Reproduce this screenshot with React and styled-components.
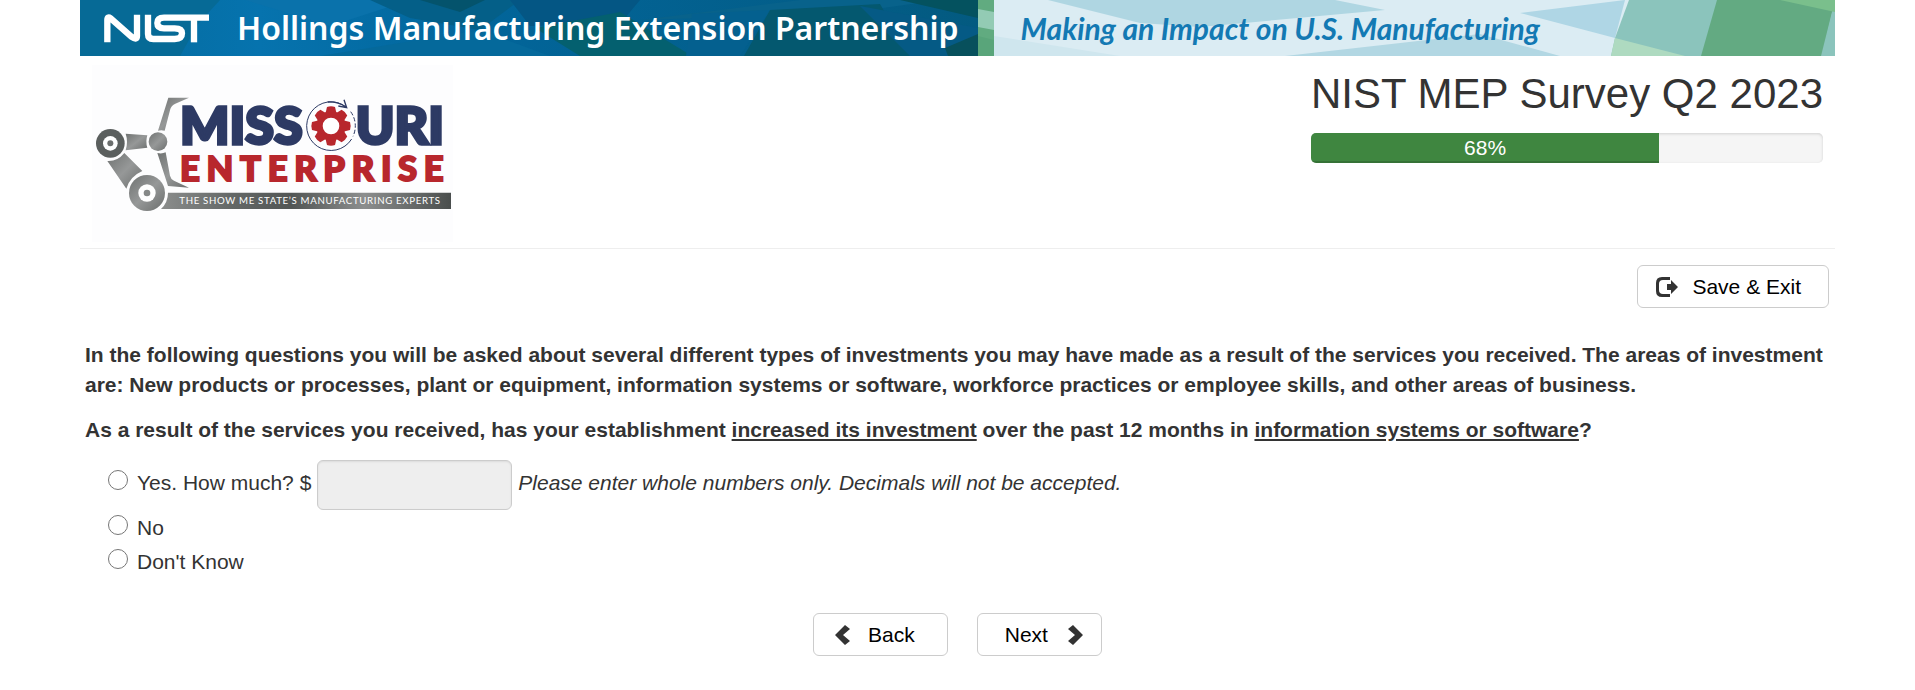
import React, { useState } from "react";
import styled, { createGlobalStyle } from "styled-components";

const GlobalStyle = createGlobalStyle`
  * {
    box-sizing: border-box;
  }
  body {
    margin: 0;
    background-color: #fff;
    color: #333;
    font-family: "Liberation Sans", Arial, sans-serif;
    font-size: 21px;
    line-height: 30px;
  }
`;

const Page = styled.div`
  padding: 0 80px 32px;
`;

const Banner = styled.div`
  position: relative;
  display: flex;
  align-items: center;
  height: 56px;
  overflow: hidden;
`;

const BannerArt = styled.svg`
  position: absolute;
  inset: 0;
  width: 100%;
  height: 100%;
`;

const BannerLeft = styled.div`
  position: relative;
  display: flex;
  align-items: center;
  gap: 28px;
  width: 52%;
  padding-left: 24px;
`;

const BannerTitle = styled.div`
  font-family: "Noto Sans", sans-serif;
  font-size: 32px;
  font-weight: 600;
  line-height: 56px;
  white-space: nowrap;
  color: #fff;
`;

const Tagline = styled.div`
  position: relative;
  padding-left: 28px;
  font-family: Lato, sans-serif;
  font-size: 30px;
  font-style: italic;
  font-weight: 700;
  line-height: 56px;
  white-space: nowrap;
  color: #1379b3;
`;

const Header = styled.header`
  display: flex;
  justify-content: space-between;
  align-items: flex-start;
  height: 193px;
  padding: 9px 12px 0;
  border-bottom: 1px solid #eee;
`;

const Status = styled.div`
  display: flex;
  flex-direction: column;
  gap: 15px;
`;

const Title = styled.h1`
  margin: 0;
  padding-top: 5px;
  font-size: 42px;
  font-weight: 400;
  line-height: 48px;
`;

const Progress = styled.div`
  height: 30px;
  overflow: hidden;
  border-radius: 5px;
  background-color: #f5f5f5;
  box-shadow: inset 0 1px 3px rgba(0, 0, 0, 0.15);
`;

const ProgressBar = styled.div`
  height: 100%;
  background-color: #3f8640;
  box-shadow: inset 0 -2px 0 rgba(0, 0, 0, 0.15);
  color: #fff;
  text-align: center;
`;

const Toolbar = styled.div`
  display: flex;
  justify-content: flex-end;
  padding: 16px 6px 0;
`;

const Button = styled.button`
  display: flex;
  align-items: center;
  gap: ${({ $gap }) => $gap || 18}px;
  height: 43px;
  padding: ${({ $pad }) => $pad || "0 27px 0 18px"};
  border: 1px solid #ccc;
  border-radius: 6px;
  background-color: #fff;
  color: #000;
  font: inherit;
  cursor: pointer;
  svg {
    fill: #333;
  }
`;

const Question = styled.fieldset`
  min-width: 0;
  margin: 32px 0 0;
  padding: 0 6px 0 5px;
  border: none;
`;

const Paragraph = styled.p`
  margin: 0 0 15px;
  font-weight: 700;
`;

const Options = styled.div`
  padding-left: 23px;
`;

const Option = styled.div`
  display: flex;
  align-items: center;
  gap: 6px;
  margin-bottom: ${({ $spaced }) => ($spaced ? 3 : 0)}px;
`;

const OptionLabel = styled.label`
  display: flex;
  align-items: center;
  gap: 9px;
  padding-bottom: 4px;
`;

const Hint = styled.em`
  padding-bottom: 4px;
`;

const Radio = styled.input`
  width: 20px;
  height: 20px;
  margin: 0 0 6px;
`;

const Amount = styled.input`
  width: 195px;
  height: 50px;
  padding: 8px 16px;
  border: 1px solid #ccc;
  border-radius: 6px;
  background-color: ${({ disabled }) => (disabled ? "#eee" : "#fff")};
  box-shadow: inset 0 1px 2px rgba(0, 0, 0, 0.08);
  color: #555;
  font: inherit;
`;

const Nav = styled.nav`
  display: flex;
  justify-content: center;
  gap: 29px;
  margin-top: 32px;
`;

const NistMark = () => (
  <svg width="105" height="29" viewBox="0 0 315 87" role="img" aria-label="NIST">
    <g fill="none" stroke="#fff" strokeWidth="19" strokeLinejoin="round">
      <path d="M10 85V18Q10 6 20 13L82 68Q99 80 99 66V2" />
      <path d="M132 2V60Q132 75 148 75H212Q234 75 234 58Q234 43 212 43H180Q160 43 160 27Q160 11 180 11H315" />
      <path d="M270 11V85" />
    </g>
  </svg>
);

const BannerBackground = () => (
  <BannerArt viewBox="0 0 1755 56" preserveAspectRatio="none" aria-hidden="true">
    <defs>
      <linearGradient id="deep">
        <stop offset="0" stopColor="#046a9c" />
        <stop offset="0.2" stopColor="#0673ae" />
        <stop offset="0.45" stopColor="#02659a" />
        <stop offset="1" stopColor="#035a80" />
      </linearGradient>
    </defs>
    <rect width="898" height="56" fill="url(#deep)" />
    <path d="M0 0H140L118 24L100 56H0Z" fill="#066a96" />
    <path d="M165 0H330L250 26Z" fill="#0a72ab" />
    <path d="M290 0H440L400 30L330 18Z" fill="#045f88" />
    <path d="M340 0H405L380 12Z" fill="#04536c" />
    <path d="M240 56L400 30L470 56Z" fill="#05699b" />
    <path d="M430 0H560L540 24L450 26Z" fill="#045684" />
    <path d="M455 28L540 12L612 56H500Z" fill="#04606f" />
    <path d="M560 20L720 0H860L760 14Z" fill="#08628b" />
    <path d="M612 14L690 10L660 56H606Z" fill="#04608f" />
    <path d="M690 10L800 4L830 56H664Z" fill="#04586f" />
    <path d="M780 6L898 28V56H830Z" fill="#055a85" />
    <path d="M865 48L898 34V56H868Z" fill="#07505c" />
    <path d="M820 0H898V18Z" fill="#04525f" />
    <rect x="898" width="16" height="56" fill="#61ab80" />
    <path d="M898 9L914 12V30L898 27Z" fill="#93cbb4" />
    <path d="M898 36L914 40V56H898Z" fill="#59a57a" />
    <rect x="914" width="841" height="56" fill="#dbecf3" />
    <path d="M968 0H1255L1305 10L1120 27L1060 23Z" fill="#afd6e2" />
    <path d="M914 36L1040 56H914Z" fill="#cfe6ee" />
    <path d="M1205 56L1400 34L1480 56Z" fill="#b2d7e3" />
    <path d="M1440 13L1545 0L1535 38Z" fill="#afd6e5" />
    <path d="M1549 0H1755V56H1531L1535 38Z" fill="#8bc4bc" />
    <path d="M1535 38L1605 56H1531Z" fill="#aedac0" />
    <path d="M1637 0H1755L1741 56H1621Z" fill="#63aa82" />
    <path d="M1700 0H1755V12Z" fill="#7abf8c" />
    <path d="M1752 13H1755V56H1742Z" fill="#8bc4bc" />
  </BannerArt>
);

// gear teeth, rotated around the centre
const toothAngles = [0, 45, 90, 135, 180, 225, 270, 315];

const CompanyLogo = () => (
  <svg
    width="361"
    height="177"
    viewBox="36 0 1083 531"
    role="img"
    aria-label="Missouri Enterprise"
  >
    <defs>
      <linearGradient id="steel" x1="0" y1="0" x2="1" y2="1">
        <stop offset="0" stopColor="#6f7271" />
        <stop offset="0.5" stopColor="#969898" />
        <stop offset="1" stopColor="#6b6e6d" />
      </linearGradient>
      <linearGradient id="bar">
        <stop offset="0" stopColor="#8b8d8c" />
        <stop offset="0.25" stopColor="#636766" />
        <stop offset="0.45" stopColor="#525655" />
        <stop offset="0.7" stopColor="#8c8e8e" />
        <stop offset="1" stopColor="#4a4e4d" />
      </linearGradient>
    </defs>
    <rect x="36" width="1083" height="531" fill="#fdfdfe" />
    <g fill="url(#steel)">
      <path d="M265 98H327L286 116Q274 121 271 132L254 197Q244 194 234 197Z" />
      <path d="M232 264Q246 267 257 262L270 332Q272 342 282 347L327 368L264 363Z" />
      <path d="M137 206L202 211Q196 230 202 248L137 256Q145 230 137 206Z" />
      <path d="M82 288Q112 290 133 264L187 318Q150 334 139 371Z" />
      <circle cx="234" cy="230" r="28" />
      <circle cx="201" cy="384" r="54" />
    </g>
    <circle cx="91" cy="235" r="43" fill="#5b5f5e" />
    <circle cx="91" cy="235" r="22" fill="#fff" />
    <circle cx="91" cy="235" r="9" fill="#6b6e6d" />
    <circle cx="201" cy="384" r="26" fill="#fff" />
    <circle cx="201" cy="384" r="10" fill="#868988" />
    <path d="M264 383H1113V432H243Q264 412 264 383Z" fill="url(#bar)" />

    <g
      fill="#2d3a64"
      stroke="#2d3a64"
      strokeWidth="10"
      fontFamily="Lato, sans-serif"
      fontWeight="900"
      fontSize="156"
    >
      <text x="300" y="238">MISS</text>
      <text x="827" y="238">URI</text>
    </g>
    <text
      x="300"
      y="347"
      fill="#b8272d"
      stroke="#b8272d"
      strokeWidth="6"
      fontFamily="Lato, sans-serif"
      fontWeight="900"
      fontSize="104"
      letterSpacing="20"
    >
      ENTERPRISE
    </text>
    <text
      x="298"
      y="417"
      fill="#fff"
      fontFamily="Lato, sans-serif"
      fontSize="29"
      letterSpacing="2"
    >
      THE SHOW ME STATE’S MANUFACTURING EXPERTS
    </text>

    <g transform="translate(753 183)">
      <g fill="#b8272d">
        <circle r="44" />
        {toothAngles.map((angle) => (
          <path
            key={angle}
            d="M-17 -36L-12 -57Q0 -61 12 -57L17 -36Z"
            transform={`rotate(${angle})`}
          />
        ))}
      </g>
      <circle r="25" fill="#fff" />
      <g fill="none" stroke="#2d3a64" strokeWidth="3">
        <path d="M45 -57A73 73 0 1 0 62 39" />
        <path d="M59 -43A73 73 0 0 1 66 31" strokeDasharray="13 6" />
        <path d="M-10 -72Q20 -74 45 -57M39 -79L47 -55L22 -60" strokeWidth="4" />
      </g>
    </g>
  </svg>
);

const ExitIcon = () => (
  <svg width="22" height="20" viewBox="0 0 22 20" aria-hidden="true">
    <path d="M14 0V3H7Q3 3 3 7V13Q3 17 7 17H14V20H6Q0 20 0 14V6Q0 0 6 0Z" />
    <path d="M11 7H15V3L22 10L15 17V13H11Z" />
  </svg>
);

const ChevronLeft = () => (
  <svg width="15" height="20" viewBox="0 0 15 20" aria-hidden="true">
    <path d="M10 0L15 4L8 10L15 16L10 20L0 10Z" />
  </svg>
);

const ChevronRight = () => (
  <svg width="15" height="20" viewBox="0 0 15 20" aria-hidden="true">
    <path d="M5 0L0 4L7 10L0 16L5 20L15 10Z" />
  </svg>
);

const App = () => {
  const [answer, setAnswer] = useState("");
  const [amount, setAmount] = useState("");
  const percent = 68;

  return (
    <>
      <GlobalStyle />
      <Page>
        <Banner>
          <BannerBackground />
          <BannerLeft>
            <NistMark />
            <BannerTitle>Hollings Manufacturing Extension Partnership</BannerTitle>
          </BannerLeft>
          <Tagline>Making an Impact on U.S. Manufacturing</Tagline>
        </Banner>

        <Header>
          <CompanyLogo />
          <Status>
            <Title>NIST MEP Survey Q2 2023</Title>
            <Progress
              role="progressbar"
              aria-label="Survey progress"
              aria-valuenow={percent}
              aria-valuemin={0}
              aria-valuemax={100}
            >
              <ProgressBar style={{ width: `${percent}%` }}>{percent}%</ProgressBar>
            </Progress>
          </Status>
        </Header>

        <Toolbar>
          <Button type="button" $gap={14}>
            <ExitIcon />
            Save &amp; Exit
          </Button>
        </Toolbar>

        <Question>
          <Paragraph>
            In the following questions you will be asked about several different types of
            investments you may have made as a result of the services you received. The
            areas of investment are: New products or processes, plant or equipment,
            information systems or software, workforce practices or employee skills, and
            other areas of business.
          </Paragraph>
          <Paragraph>
            As a result of the services you received, has your establishment{" "}
            <u>increased its investment</u> over the past 12 months in{" "}
            <u>information systems or software</u>?
          </Paragraph>
          <Options>
            <Option $spaced>
              <OptionLabel>
                <Radio
                  type="radio"
                  name="investment"
                  checked={answer === "yes"}
                  onChange={() => setAnswer("yes")}
                />
                <span>Yes. How much? $</span>
              </OptionLabel>
              <Amount
                type="text"
                aria-label="Amount in dollars"
                value={amount}
                disabled={answer !== "yes"}
                onChange={(e) => setAmount(e.target.value)}
              />
              <Hint>Please enter whole numbers only. Decimals will not be accepted.</Hint>
            </Option>
            <Option>
              <OptionLabel>
                <Radio
                  type="radio"
                  name="investment"
                  checked={answer === "no"}
                  onChange={() => setAnswer("no")}
                />
                <span>No</span>
              </OptionLabel>
            </Option>
            <Option>
              <OptionLabel>
                <Radio
                  type="radio"
                  name="investment"
                  checked={answer === "unknown"}
                  onChange={() => setAnswer("unknown")}
                />
                <span>Don't Know</span>
              </OptionLabel>
            </Option>
          </Options>
        </Question>

        <Nav>
          <Button type="button" $pad="0 32px 0 21px">
            <ChevronLeft />
            Back
          </Button>
          <Button type="button" $pad="0 18px 0 27px" $gap={20}>
            Next
            <ChevronRight />
          </Button>
        </Nav>
      </Page>
    </>
  );
};

export default App;
